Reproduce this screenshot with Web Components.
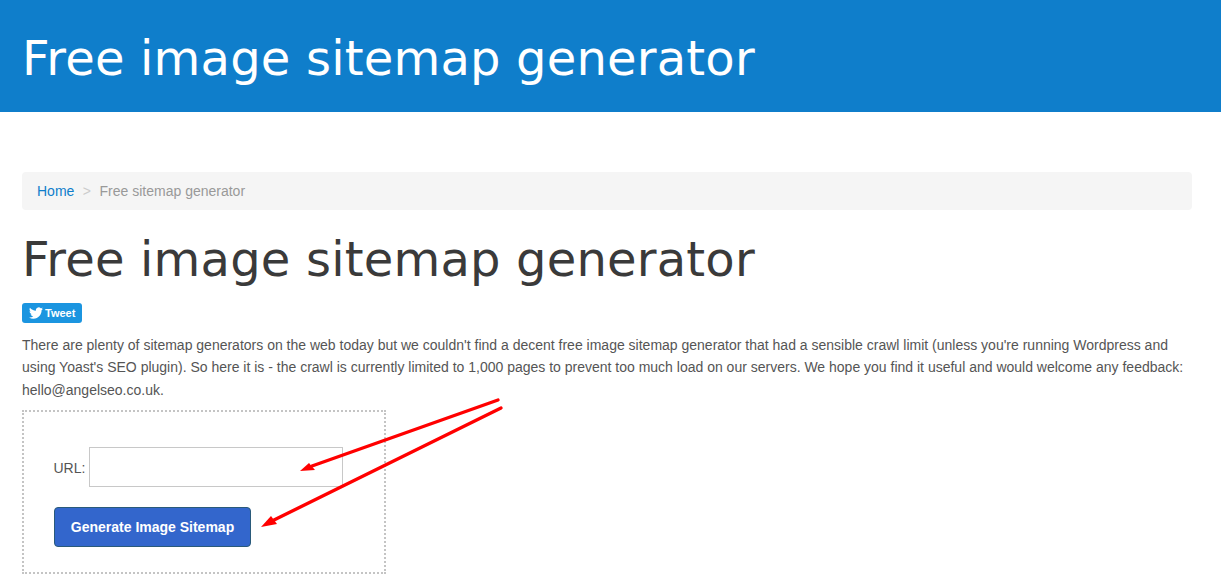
<!DOCTYPE html>
<html><head><meta charset="utf-8"><style>
html,body{margin:0;padding:0;background:#fff}
body{font:14px/22px "Liberation Sans",Arial,sans-serif;color:#555;height:577px;overflow:hidden}
</style></head><body>
<site-header>Free image sitemap generator</site-header>
<page-main>
<bread-crumbs><a slot="home">Home</a><span slot="current">Free sitemap generator</span></bread-crumbs>
<page-title>Free image sitemap generator</page-title>
<tweet-button>Tweet</tweet-button>
<intro-text>There are plenty of sitemap generators on the web today but we couldn't find a decent free image sitemap generator that had a sensible crawl limit (unless you're running Wordpress and using Yoast's SEO plugin). So here it is - the crawl is currently limited to 1,000 pages to prevent too much load on our servers. We hope you find it useful and would welcome any feedback: hello@angelseo.co.uk.</intro-text>
<sitemap-form></sitemap-form>
</page-main>
<script>
function def(name,html){customElements.define(name,class extends HTMLElement{constructor(){super();this.attachShadow({mode:'open'}).innerHTML=html}})}
const H='"DejaVu Sans",Verdana,sans-serif';
def('site-header',`<style>:host{display:block;height:112px;background:#0f7ecb;color:#fff;box-sizing:border-box;padding:0 22px}
h1{margin:0;font:48px/116px ${H};letter-spacing:.19px;white-space:nowrap}</style><h1><slot></slot></h1>`);
def('page-main',`<style>:host{display:block;padding:60px 29px 0 22px}</style><slot></slot>`);
def('bread-crumbs',`<style>:host{display:flex;height:38px;align-items:center;background:#f5f5f5;border-radius:4px;padding:0 15px;color:#999;box-sizing:border-box}
::slotted(a){color:#0f7ecb}.s{color:#ccc;padding:0 8.5px}</style><slot name="home"></slot><span class="s">&gt;</span><slot name="current"></slot>`);
def('page-title',`<style>:host{display:block;margin-top:20px;color:#3a3a3a}
h2{margin:0;font:48px/58px ${H};letter-spacing:.19px;white-space:nowrap}</style><h2><slot></slot></h2>`);
def('tweet-button',`<style>:host{display:flex;width:60px;height:20px;margin-top:15px;box-sizing:border-box;align-items:center;background:#1b95e0;border-radius:3px;color:#fff;font:bold 11px/20px "Liberation Sans",Arial,sans-serif;padding-left:7px;gap:2px}
svg{width:14px;height:14px;display:block}</style>
<svg viewBox="0 0 24 24"><path fill="#fff" d="M23.95 4.57a10 10 0 0 1-2.82.77 4.96 4.96 0 0 0 2.16-2.72c-.95.55-2 .96-3.13 1.2a4.92 4.92 0 0 0-8.38 4.48C7.69 8.1 4.07 6.13 1.64 3.16a4.82 4.82 0 0 0-.67 2.48c0 1.71.87 3.21 2.19 4.1a4.9 4.9 0 0 1-2.23-.61v.06c0 2.39 1.7 4.38 3.95 4.83a5 5 0 0 1-2.21.08 4.94 4.94 0 0 0 4.6 3.42A9.87 9.87 0 0 1 0 19.54a14 14 0 0 0 7.56 2.21c9.05 0 14-7.5 14-13.98 0-.21 0-.42-.02-.63a9.94 9.94 0 0 0 2.46-2.55z"/></svg><slot></slot>`);
def('intro-text',`<style>:host{display:block;margin-top:11px;line-height:22.4px}</style><slot></slot>`);
def('sitemap-form',`<style>:host{display:block;position:relative;width:364px;height:164px;box-sizing:border-box;margin-top:8.8px;border:2px dotted #c4c4c4;padding:35px 30px 0;line-height:22px}
.row{display:flex;align-items:center;gap:4px;margin-left:-.5px}
.row span{position:relative;top:1px}
.inp{width:254px;height:40px;box-sizing:border-box;border:1px solid #c8c8c8;background:#fff}
.btn{display:flex;align-items:center;justify-content:center;width:197px;height:40px;box-sizing:border-box;margin-top:20px;background:#3366cc;border:1px solid #2a5a7a;border-radius:4px;color:#fff;font:bold 14px/20px "Liberation Sans",Arial,sans-serif}
svg{position:fixed;left:0;top:0;width:1221px;height:577px;pointer-events:none}</style>
<div class="row"><span>URL:</span><div class="inp"></div></div>
<div class="btn">Generate Image Sitemap</div>
<svg viewBox="0 0 1221 577"><g fill="none" stroke="#f00" stroke-width="3.4" stroke-linecap="round"><path d="M498 400 312 466"/><path d="M501 408 274 520"/></g><g fill="#f00"><path d="M300 471 309 463 315 470Z"/><path d="M261 527 271 516 277 524Z"/></g></svg>`);
</script></body></html>
